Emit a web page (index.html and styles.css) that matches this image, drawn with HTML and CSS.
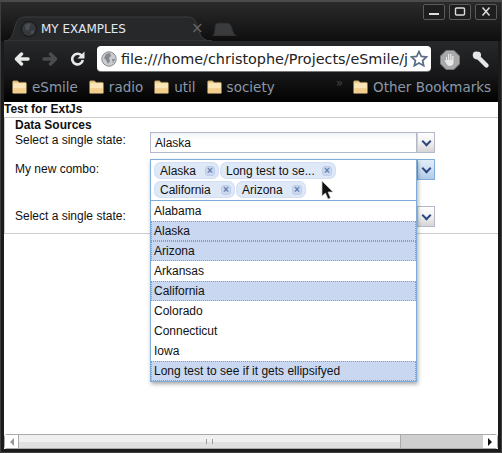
FILE: index.html
```html
<!DOCTYPE html>
<html>
<head>
<meta charset="utf-8">
<title>MY EXAMPLES</title>
<link rel="stylesheet" href="styles.css">
</head>
<body>
<div class="window">
  <div class="tabstrip">
    <div class="tab">
      <svg class="tab-shape" width="208" height="25" viewBox="0 0 208 25"><path d="M0 25C6 25 8 21 10 14C12 6 14 1 21 1H184C190 1 192 5 194 12C196 20 199 25 208 25Z" fill="#27282a" stroke="#3c3c3c"/></svg>
      <svg class="tab-globe" width="16" height="16" viewBox="0 0 16 16"><circle cx="8" cy="8" r="7.500" fill="#35383c" stroke="#141414"/><path d="M4 4L8 2L10 4L8 6L9 8L6 10L4 7ZM10 10L13 9L12 13L10 13Z" fill="#4b4f54"/></svg>
      <span class="tab-title">MY EXAMPLES</span>
      <span class="tab-close">×</span>
    </div>
    <svg class="newtab" width="25" height="14" viewBox="0 0 25 14"><path d="M0 14C2 14 3 8 3 5C3 2 4 1 7 1H15C18 1 19 3 20 6C21 10 22 13 25 14Z" fill="#3a3b3d" stroke="#2a2a2a"/></svg>
    <div class="winbtns">
      <span class="winbtn"><svg width="20" height="14" viewBox="0 0 20 14"><rect x="5" y="8" width="10" height="2" fill="#ddd"/></svg></span>
      <span class="winbtn"><svg width="20" height="14" viewBox="0 0 20 14"><rect x="5.500" y="3" width="9" height="7" rx="1" fill="none" stroke="#ddd" stroke-width="1.400"/></svg></span>
      <span class="winbtn"><svg width="20" height="14" viewBox="0 0 20 14"><path d="M6.500 2.500L13.500 10.500M13.500 2.500L6.500 10.500" stroke="#ddd" stroke-width="1.500"/></svg></span>
    </div>
  </div>

  <div class="toolbar">
    <svg class="navicon" width="16" height="14" viewBox="0 0 16 14"><path d="M14 7H3M7.500 2L2.500 7L7.500 12" fill="none" stroke="#e8e8e8" stroke-width="3.400" stroke-linecap="round" stroke-linejoin="round"/></svg>
    <svg class="navicon" width="16" height="14" viewBox="0 0 16 14"><path d="M2 7H13M8.500 2L13.500 7L8.500 12" fill="none" stroke="#4c4c4c" stroke-width="3.400" stroke-linecap="round" stroke-linejoin="round"/></svg>
    <svg class="navicon" width="15" height="15" viewBox="0 0 15 15"><path d="M11.500 4.500A5.300 5.300 0 1 0 12.800 9" fill="none" stroke="#e8e8e8" stroke-width="2.600"/><path d="M14.500 0.500V7.500H7.500Z" fill="#e8e8e8"/></svg>
    <div class="omnibox">
      <svg class="omni-globe" width="16" height="16" viewBox="0 0 16 16"><circle cx="8" cy="8" r="7.200" fill="#c8ccd0" stroke="#8a8a8a"/><path d="M5 3L9 2L10 5L8 7L9 10L7 13L5 9L3 7ZM11 8L14 8L12 12Z" fill="#85898d"/></svg>
      <span class="omni-url">file:///home/christophe/Projects/eSmile/j</span>
      <svg class="omni-star" width="18" height="17" viewBox="0 0 18 17"><path d="M9 1.500L11.300 6.400L16.500 7L12.600 10.500L13.700 15.700L9 13L4.300 15.700L5.400 10.500L1.500 7L6.700 6.400Z" fill="#fff" stroke="#5b6c86" stroke-width="1.700"/></svg>
    </div>
    <svg class="ext" width="20" height="20" viewBox="0 0 20 20"><path d="M6 0.500H14L19.500 6V14L14 19.500H6L0.500 14V6Z" fill="#a9a9a9" stroke="#777"/><path d="M6 11V7H7V10H8V4H9.200V10H10.200V4H11.400V10H12.200V6H13.500V12C13.500 15 11.500 16 9.500 16C8 16 7 15 6 13L4.500 10.500L5.500 10Z" fill="#e8e8e8"/></svg>
    <svg class="wrench" width="18" height="18" viewBox="0 0 18 18"><path d="M5 5L14.500 14.500" stroke="#e6e6e6" stroke-width="4.400" stroke-linecap="round"/><path d="M0.800 3.500L3.500 5.500L5.800 4L5.500 0.800C3 0 1 1 0.800 3.500ZM0.800 3.500C0.300 7 3.500 9.500 7 8L9 5C9.500 2.500 8 0 5.500 0.800" fill="#e6e6e6"/></svg>
  </div>

  <div class="bookmarks">
    <span class="bm"><svg class="folder" width="15" height="14" viewBox="0 0 15 14"><use href="#folder-shape"/></svg>eSmile</span>
    <span class="bm"><svg class="folder" width="15" height="14" viewBox="0 0 15 14"><use href="#folder-shape"/></svg>radio</span>
    <span class="bm"><svg class="folder" width="15" height="14" viewBox="0 0 15 14"><use href="#folder-shape"/></svg>util</span>
    <span class="bm"><svg class="folder" width="15" height="14" viewBox="0 0 15 14"><use href="#folder-shape"/></svg>society</span>
    <span class="chevron">»</span>
    <span class="bm-sep"></span>
    <span class="bm"><svg class="folder" width="15" height="14" viewBox="0 0 15 14"><use href="#folder-shape"/></svg>Other Bookmarks</span>
  </div>

  <div class="content">
    <div class="viewport">
      <div class="page-title">Test for ExtJs</div>
      <div class="panel">
        <div class="legend">Data Sources</div>
        <div class="form-row row-one">
          <label class="form-label">Select a single state:</label>
          <div class="field"><div class="input">Alaska</div><div class="trigger"><i class="chev"></i></div></div>
        </div>
        <div class="form-row row-two">
          <label class="form-label">My new combo:</label>
          <div class="field">
            <div class="input input-multi"></div>
            <div class="trigger trigger-active"><i class="chev"></i></div>
          </div>
        </div>
        <div class="form-row row-three">
          <label class="form-label">Select a single state:</label>
          <div class="field"><div class="input"></div><div class="trigger"><i class="chev"></i></div></div>
        </div>
      </div>

      <div class="combo-pop">
        <div class="chips">
          <span class="chip chip-a">Alaska<i class="chip-x">×</i></span>
          <span class="chip chip-b">Long test to se...<i class="chip-x">×</i></span>
          <span class="chip chip-c">California<i class="chip-x">×</i></span>
          <span class="chip chip-d">Arizona<i class="chip-x">×</i></span>
        </div>
        <ul class="list">
          <li>Alabama</li>
          <li class="sel">Alaska</li>
          <li class="sel">Arizona</li>
          <li>Arkansas</li>
          <li class="sel">California</li>
          <li>Colorado</li>
          <li>Connecticut</li>
          <li>Iowa</li>
          <li class="sel">Long test to see if it gets ellipsifyed</li>
        </ul>
      </div>

      <svg class="cursor" width="14" height="20" viewBox="0 0 14 20"><path d="M1 1V16L4.500 13L7 19L9.500 18L7 12H12Z" fill="#111" stroke="#ccc" stroke-width="0.700"/></svg>
    </div>

    <div class="scrollbar">
      <span class="sb-btn"><i class="arrow-left"></i></span>
      <span class="sb-thumb"><i class="grip"></i></span>
      <span class="sb-track"></span>
      <span class="sb-btn sb-btn-right"><i class="arrow-right"></i></span>
    </div>
  </div>
</div>
<svg class="defs" width="0" height="0"><defs><g id="folder-shape"><path d="M0.500 2.500C0.500 1.200 1 0.800 2 0.800H5.500L7 2.300H13C14 2.300 14.500 2.800 14.500 3.800V12.500C14.500 13.300 14 13.600 13.300 13.600H1.700C1 13.600 0.500 13.300 0.500 12.500Z" fill="#f2cf8d" stroke="#8a7650" stroke-width="0.700"/><rect x="1.200" y="3.200" width="12.600" height="5" fill="#fbe6ba"/></g></defs></svg>
</body>
</html>
```

FILE: styles.css
```css
* { box-sizing: border-box; }
html, body { margin: 0; padding: 0; }
body { width: 502px; height: 453px; overflow: hidden; background: #1c1c1c; }
.defs { position: absolute; }

.window {
  width: 502px; height: 453px;
  display: flex; flex-direction: column;
  background: #1b1b1b;
  border-top: 2px solid #4b4b4b;
  box-shadow: inset 1px 0 0 #3d3d3d, inset -1px 0 0 #3d3d3d, inset 0 -1px 0 #3d3d3d;
  font-family: "DejaVu Sans", sans-serif;
}

.tabstrip {
  position: relative; flex: none; height: 39px; margin: 0 1px;
  background: linear-gradient(#2b2b2b, #0e0e0e);
}
.tab { position: absolute; left: 3px; top: 14px; width: 208px; height: 25px; }
.tab-shape { position: absolute; left: 0; top: 0; }
.tab-globe { position: absolute; left: 17px; top: 5px; }
.tab-title { position: absolute; left: 37px; top: 5px; font-size: 12px; line-height: 16px; color: #e4e8ee; }
.tab-close { position: absolute; left: 187px; top: 4px; font-size: 15px; line-height: 16px; color: #666; }
.newtab { position: absolute; left: 211px; top: 20px; }
.winbtns { position: absolute; right: 4px; top: 2px; display: flex; gap: 4px; }
.winbtn {
  width: 22px; height: 16px;
  border: 1px solid #5a5a5a; border-radius: 2px;
  background: #1e1e1e;
  display: flex; align-items: center; justify-content: center;
}

.toolbar {
  flex: none; height: 32px; margin-left: 4px; margin-right: 4px;
  background: linear-gradient(#26282a, #18181a);
  display: flex; align-items: center;
  padding-left: 10px;
}
.navicon { flex: none; margin-right: 12px; margin-top: 3px; }
.omnibox {
  flex: none; width: 334px; height: 25px; margin-top: 3px;
  background: #fff; border-radius: 4px;
  box-shadow: 0 1px 0 #777;
  display: flex; align-items: center;
  padding-left: 4px;
}
.omni-globe { flex: none; margin-right: 4px; }
.omni-url { flex: 1; white-space: nowrap; font-size: 14.400px; color: #222; }
.omni-star { flex: none; margin-right: 3px; }
.ext { flex: none; margin-left: 9px; margin-top: 6px; }
.wrench { flex: none; margin-left: 12px; margin-top: 5px; }

.bookmarks {
  flex: none; height: 29px; margin-left: 4px; margin-right: 4px;
  background: linear-gradient(#18181a, #020202);
  display: flex; align-items: center;
  padding: 0 0 2px 8px;
  font-size: 13.500px; color: #8a98a8;
}
.bm { display: flex; align-items: center; white-space: nowrap; margin-right: 11px; }
.folder { flex: none; margin-right: 5px; }
.chevron { color: #444; font-size: 12px; margin-left: 50px; margin-top: -8px; width: 13px; }
.bm-sep { width: 1px; height: 24px; background: #9aa5b5; margin-right: 10px; }

.content {
  flex: 1; min-height: 0;
  margin: 0 4px 4px 4px;
  background: #fff;
  display: flex; flex-direction: column;
  font-family: "Liberation Sans", Arial, sans-serif;
  font-size: 12px; color: #111;
}
.viewport { position: relative; flex: 1; min-height: 0; overflow: hidden; }
.page-title { font-weight: bold; line-height: 15px; height: 15px; }
.panel {
  height: 117px;
  border-top: 1px solid #ccc; border-left: 1px solid #ccc; border-bottom: 1px solid #ccc;
  padding-left: 10px;
}
.legend { font-weight: bold; line-height: 14px; }
.form-row { display: flex; }
.row-two { margin-top: 6px; height: 42px; }
.row-three { margin-top: 5px; }
.form-label { width: 135px; flex: none; line-height: 17px; }
.row-two .form-label, .row-three .form-label { line-height: 21px; }
.field { display: flex; align-items: flex-start; }
.input {
  width: 267px; height: 21px; padding-left: 4px;
  border: 1px solid #b5b8c8;
  background: linear-gradient(#f0f3f5, #fff 35%);
  line-height: 20px;
}
.input-multi { border-color: transparent; background: none; }
.trigger {
  width: 18px; height: 21px;
  border: 1px solid #b5b8c8;
  border-left-color: #ccd;
  background: linear-gradient(#fff, #f2f2f2 45%, #d5d5d5);
  display: flex; align-items: center; justify-content: center;
}
.trigger-active {
  border-color: #7eadd9;
  background: linear-gradient(#e2edf8, #cfe0f2 45%, #b0cbe9);
}
.chev {
  width: 7px; height: 7px; margin-top: -3px;
  border-right: 2px solid #2d4785; border-bottom: 2px solid #2d4785;
  transform: rotate(45deg);
}

.combo-pop {
  position: absolute; left: 146px; top: 57px; width: 267px;
  box-shadow: 1px 2px 4px rgba(0,0,0,0.35);
  background: #fff;
}
.chips {
  height: 42px; padding: 2px 0 0 3px;
  border: 1px solid #7eadd9;
  background: #fff;
  display: flex; flex-wrap: wrap; align-content: flex-start; gap: 2px 1px;
}
.chip {
  display: flex; align-items: center; justify-content: space-between;
  height: 17px; padding: 0 4px 0 6px;
  background: #dfe8f6; border-radius: 7px;
  box-shadow: inset 0 0 0 1px #d3e0f4;
  white-space: nowrap;
}
.chip-a { width: 65px; }
.chip-b { width: 116px; }
.chip-c { width: 81px; }
.chip-d { width: 70px; }
.chip-x {
  width: 10px; height: 10px; border-radius: 3px;
  background: #cbd8ef; border: 1px solid #bccdea;
  font-style: normal; font-weight: bold; font-size: 10px; line-height: 8px;
  display: flex; justify-content: center;
  color: #5f7db0;
}
.list {
  list-style: none; margin: 0; padding: 0;
  border: 1px solid #7eadd9; border-top: 0;
}
.list li {
  height: 20px; line-height: 18px; padding-left: 2px;
  border: 1px solid transparent; white-space: nowrap;
}
.list li.sel {
  background: #c9d8f0;
  border: 1px dotted #7c9edb;
}

.cursor { position: absolute; left: 317px; top: 78px; }

.scrollbar {
  flex: none; height: 15px; display: flex;
  border: 1px solid #aaa; border-radius: 3px;
  background: #cfcfcf;
}
.sb-btn {
  flex: none; width: 13px; background: #fff;
  display: flex; align-items: center; justify-content: center;
}
.sb-btn-right { width: 14px; }
.sb-thumb {
  flex: none; width: 383px;
  border-left: 1px solid #aaa; border-right: 1px solid #aaa;
  background: linear-gradient(#f0f0f0 50%, #e0e0e0 50%);
  display: flex; align-items: center; justify-content: center;
}
.sb-track { flex: 1; }
.grip { width: 7px; height: 5px; border-left: 1px solid #999; border-right: 1px solid #999; }
.arrow-left { width: 0; height: 0; border: 4px solid transparent; border-left: 0; border-right: 4px solid #999; }
.arrow-right { width: 0; height: 0; border: 4px solid transparent; border-right: 0; border-left: 4px solid #111; }
```
